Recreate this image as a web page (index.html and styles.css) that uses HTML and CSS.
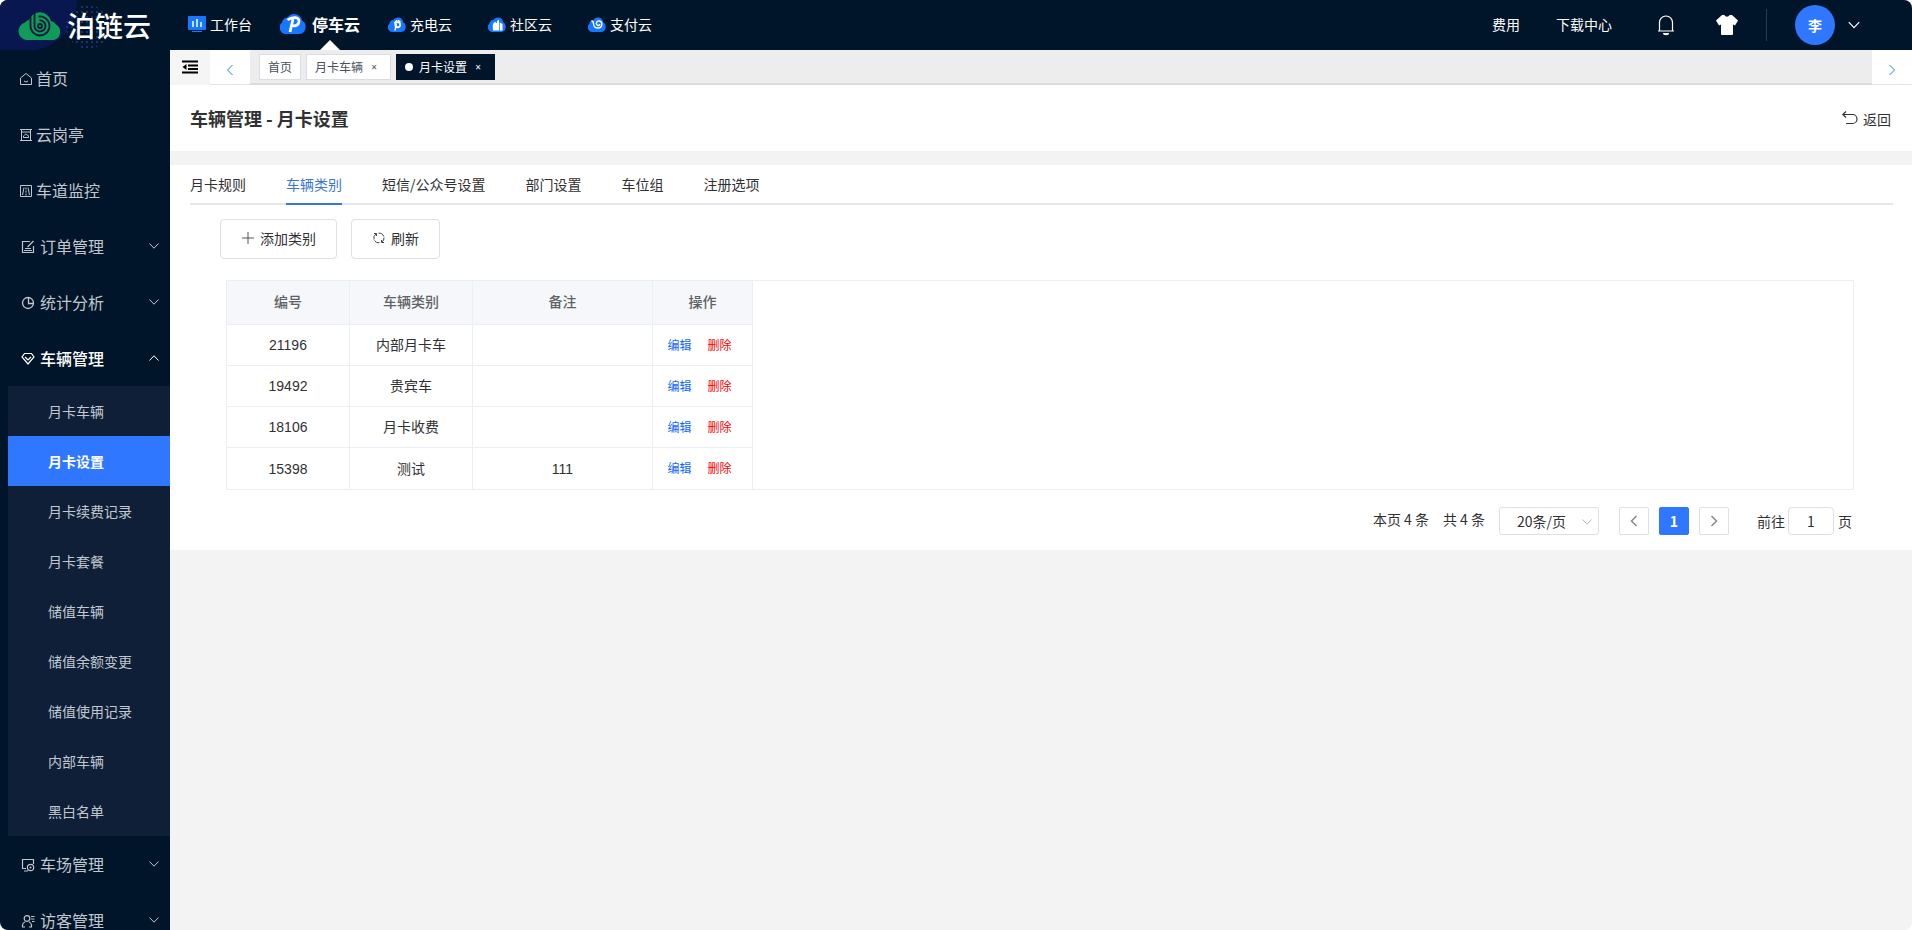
FILE: index.html
```html
<!DOCTYPE html>
<html lang="zh-CN">
<head>
<meta charset="utf-8">
<title>泊链云 - 月卡设置</title>
<link rel="stylesheet" href="styles.css">
</head>
<body>
<svg class="defs" aria-hidden="true">
  <symbol id="down" viewBox="0 0 12 12"><path d="M1.5 3.5 6 8.2l4.500-4.700" fill="none" stroke="currentColor"/></symbol>
  <symbol id="up" viewBox="0 0 12 12"><path d="M1.500 8.500 6 3.800l4.500 4.700" fill="none" stroke="currentColor"/></symbol>
  <symbol id="left" viewBox="0 0 12 12"><path d="M8.500 1 3.500 6l5 5" fill="none" stroke="currentColor"/></symbol>
  <symbol id="right" viewBox="0 0 12 12"><path d="M3.500 1l5 5-5 5" fill="none" stroke="currentColor"/></symbol>
  <symbol id="cloud" viewBox="0 0 26 22"><path d="M6 22a6.500 6.500 0 0 1-4-11.500Q3 6 7.500 5.500a8 8 0 0 1 14.500 3A7.300 7.300 0 0 1 19.500 22z" fill="#1677ff"/></symbol>
</svg>
<div class="app">
  <header class="topbar">
    <a class="logo" href="#">
      <svg class="logo-bg" viewBox="0 0 170 50" aria-hidden="true">
        <defs><pattern id="dots" width="5" height="5" patternUnits="userSpaceOnUse"><rect x="1" y="1" width="2" height="2" fill="#16307f"/></pattern></defs>
        <path d="M0 0h77C77 26 61 44 36 50H0z" fill="#091750"/>
        <circle cx="88" cy="27" r="22" fill="url(#dots)"/>
      </svg>
      <svg class="logo-mark" viewBox="0 0 46 32" aria-hidden="true">
        <path d="M9 31a9 9 0 0 1-1-17.500Q10 11 12 11a11.500 11.500 0 0 1 22 1 7 7 0 0 1 5 3.500A8.500 8.500 0 0 1 37 31z" fill="#109c58"/>
        <g fill="none" stroke="#06183c" stroke-width="1.800"><path d="M13.500 4.500V17a9.500 9.500 0 1 0 8-9.400"/><path d="M17.500 3v14a5.500 5.500 0 1 0 5-5.500"/><circle cx="23" cy="17" r="2"/></g>
      </svg>
      <span>泊链云</span>
    </a>
    <nav class="products" aria-label="产品">
      <a href="#"><svg width="18" height="18" viewBox="0 0 18 18"><rect y="1" width="18" height="14" rx="1" fill="#1677ff"/><path d="M5 6v6M9 4v8M13 7v5" stroke="#fff" stroke-width="1.500"/><path d="M4 16.500h10" stroke="#1677ff"/></svg>工作台</a>
      <a href="#" class="current"><svg width="26" height="22" viewBox="0 0 26 22"><use href="#cloud"/><path d="m10 20 3-13M7.500 8C12 4.500 19.500 4.500 19 9.500c-.5 4-4 5-7 4" fill="none" stroke="#fff" stroke-width="2.800"/></svg>停车云</a>
      <a href="#"><svg width="18" height="16" viewBox="0 0 26 22" preserveAspectRatio="none"><use href="#cloud"/><circle cx="14" cy="12" r="3.500" fill="none" stroke="#fff" stroke-width="2.500"/><path d="m10 20 2-9M9 10l4-4M14 6l4 2" stroke="#fff" stroke-width="2"/></svg>充电云</a>
      <a href="#"><svg width="18" height="16" viewBox="0 0 26 22" preserveAspectRatio="none"><use href="#cloud"/><path d="M7 20v-9l3-3 3 2v10zM13 20V7l3-2v15zM17 20V9l4 2v9z" fill="#fff"/></svg>社区云</a>
      <a href="#"><svg width="18" height="16" viewBox="0 0 26 22" preserveAspectRatio="none"><use href="#cloud"/><path d="M5 7c2 0 3 1 3 4 1 8 12 7 12 0 0-5-7-6-8-1 0 4 5 4 5 1" fill="none" stroke="#fff" stroke-width="2"/></svg>支付云</a>
    </nav>
    <div class="tools">
      <a href="#" class="fee">费用</a>
      <a href="#" class="downloads">下载中心</a>
      <button type="button" class="bell" aria-label="通知"><svg width="18" height="22" viewBox="0 0 18 22"><path d="M1 17h16M2.500 17V8.500a6.500 6.500 0 0 1 13 0V17" fill="none" stroke="#fff" stroke-width="1.200"/><path d="M6 19h6a3 2.200 0 0 1-6 0z" fill="#fff"/></svg></button>
      <button type="button" class="shirt" aria-label="主题"><svg width="22" height="20" viewBox="0 0 22 20"><path d="M6 0h2.500c1 2.300 4 2.300 5 0H16l6 5.500-3 5-2-1V19q0 1-1 1H6q-1 0-1-1V9.500l-2 1-3-5z" fill="#fff"/></svg></button>
      <span class="divider"></span>
      <button type="button" class="account"><span class="avatar">李</span><svg width="14" height="14"><use href="#down"/></svg></button>
    </div>
  </header>
  <div class="body">
    <nav class="sidebar" aria-label="主菜单">
      <a class="item" href="#"><svg width="12" height="12" viewBox="0 0 12 12"><path d="M.5 5 6 .5 11.500 5v6.500H.5zM4 8q2 2 4 0" fill="none" stroke="currentColor"/></svg>首页</a>
      <a class="item" href="#"><svg width="12" height="12" viewBox="0 0 12 12"><path d="M0 .5h12M1.500 1v10M10.500 1v10M0 11.500h12M1 3h10M3.500 8.500h5Q9 6 7 6 6 4 4.500 6 3 6.500 3.500 8.500z" fill="none" stroke="currentColor"/></svg>云岗亭</a>
      <a class="item" href="#"><svg width="12" height="12" viewBox="0 0 12 12"><path d="M.5.5h11v11H.5zM4 2.500 2.500 10M8 2.500 9.500 10M6 2.500v2M6 5.500v2M6 8.500v2" fill="none" stroke="currentColor"/></svg>车道监控</a>
      <a class="item group" href="#"><svg width="14" height="14" viewBox="0 0 14 14"><path d="M9 1.500H1.500v11h11V6M3 10.500h8M4 8.500h6M6.500 7 12.500 1" fill="none" stroke="currentColor" stroke-width="1.200"/></svg>订单管理<svg class="arrow"><use href="#down"/></svg></a>
      <a class="item group" href="#"><svg width="14" height="14" viewBox="0 0 14 14"><circle cx="7" cy="7" r="5.500" fill="none" stroke="currentColor" stroke-width="1.300"/><path d="M7.500 1.500v6h5" fill="none" stroke="currentColor" stroke-width="1.300"/></svg>统计分析<svg class="arrow"><use href="#down"/></svg></a>
      <a class="item group open" href="#"><svg width="14" height="14" viewBox="0 0 14 14"><path d="M3.500 1.500h7L13 5 7 12 1 5zM4 5l3 3 3-3" fill="none" stroke="currentColor" stroke-width="1.200"/></svg>车辆管理<svg class="arrow"><use href="#up"/></svg></a>
      <div class="submenu">
        <a href="#">月卡车辆</a>
        <a href="#" class="active">月卡设置</a>
        <a href="#">月卡续费记录</a>
        <a href="#">月卡套餐</a>
        <a href="#">储值车辆</a>
        <a href="#">储值余额变更</a>
        <a href="#">储值使用记录</a>
        <a href="#">内部车辆</a>
        <a href="#">黑白名单</a>
      </div>
      <a class="item group" href="#"><svg width="14" height="14" viewBox="0 0 14 14"><path d="M5 10.500H1.500v-9h11V6M3 13h4" fill="none" stroke="currentColor" stroke-width="1.200"/><circle cx="9.500" cy="9.500" r="3.200" fill="none" stroke="currentColor" stroke-width="1.200"/><circle cx="9.500" cy="9.500" r="1" fill="currentColor"/></svg>车场管理<svg class="arrow"><use href="#down"/></svg></a>
      <a class="item group" href="#"><svg width="14" height="14" viewBox="0 0 14 14"><circle cx="6" cy="4.500" r="2.800" fill="none" stroke="currentColor" stroke-width="1.200"/><path d="M1.500 13v-2Q2 8.500 4 8M8 8q2 .5 2.500 3v2M10 2.500h3.500M10 5h3.500M11 7.500h2.500M1 13h3M8 13h3" fill="none" stroke="currentColor" stroke-width="1.200"/></svg>访客管理<svg class="arrow"><use href="#down"/></svg></a>
    </nav>
    <main class="main">
      <div class="tagbar">
        <button type="button" class="fold" aria-label="收起菜单"><svg width="16" height="14" viewBox="0 0 16 14"><path d="M0 1.500h16M6 5.500h10M6 9h10M0 12.500h16" stroke="#000" stroke-width="2"/><path d="M4.500 4v6L.5 7z"/></svg></button>
        <button type="button" class="scroll" aria-label="向左"><svg width="12" height="12"><use href="#left"/></svg></button>
        <div class="tags">
          <a class="tag" href="#">首页</a>
          <a class="tag" href="#">月卡车辆<span class="close">×</span></a>
          <a class="tag on" href="#"><i class="dot"></i>月卡设置<span class="close">×</span></a>
        </div>
        <button type="button" class="scroll" aria-label="向右"><svg width="12" height="12"><use href="#right"/></svg></button>
      </div>
      <div class="heading">
        <h1>车辆管理 - 月卡设置</h1>
        <a href="#" class="back"><svg width="16" height="14" viewBox="0 0 16 14"><path d="M4 .5.800 3.500 4 6.500M1 3.500h9.500a4.500 4.500 0 0 1 0 9H4" fill="none" stroke="#333" stroke-width="1.200"/></svg>返回</a>
      </div>
      <section class="panel">
        <nav class="tabs" aria-label="设置">
          <a href="#">月卡规则</a>
          <a href="#" class="selected">车辆类别</a>
          <a href="#">短信/公众号设置</a>
          <a href="#">部门设置</a>
          <a href="#">车位组</a>
          <a href="#">注册选项</a>
        </nav>
        <div class="actions">
          <button type="button"><svg width="14" height="14" viewBox="0 0 14 14"><path d="M7 1v12M1 7h12" stroke="#555"/></svg>添加类别</button>
          <button type="button"><svg width="14" height="14" viewBox="0 0 14 14"><path d="M2 8.500A5 5 0 0 1 4 3M2 2.500h2.500V5M6.500 2.200A5 5 0 0 1 11.800 5.500M12 6.500A5 5 0 0 1 10 11M12 11.500H9.500V9M7.500 11.800A5 5 0 0 1 2.500 9.500" fill="none" stroke="#444"/></svg>刷新</button>
        </div>
        <div class="grid">
          <table>
            <colgroup><col class="c-id"><col class="c-id"><col class="c-note"><col class="c-ops"></colgroup>
            <thead><tr><th>编号</th><th>车辆类别</th><th>备注</th><th>操作</th></tr></thead>
            <tbody>
              <tr><td>21196</td><td>内部月卡车</td><td></td><td><a href="#" class="edit">编辑</a><a href="#" class="remove">删除</a></td></tr>
              <tr><td>19492</td><td>贵宾车</td><td></td><td><a href="#" class="edit">编辑</a><a href="#" class="remove">删除</a></td></tr>
              <tr><td>18106</td><td>月卡收费</td><td></td><td><a href="#" class="edit">编辑</a><a href="#" class="remove">删除</a></td></tr>
              <tr><td>15398</td><td>测试</td><td>111</td><td><a href="#" class="edit">编辑</a><a href="#" class="remove">删除</a></td></tr>
            </tbody>
          </table>
        </div>
        <div class="pager">
          <span>本页 4 条</span>
          <span>共 4 条</span>
          <div class="size"><select aria-label="每页条数"><option>20条/页</option></select><svg width="12" height="12"><use href="#down"/></svg></div>
          <button type="button" aria-label="上一页"><svg class="thick" width="12" height="12"><use href="#left"/></svg></button>
          <button type="button" class="page">1</button>
          <button type="button" aria-label="下一页"><svg class="thick" width="12" height="12"><use href="#right"/></svg></button>
          <label class="jump">前往<input type="text" value="1">页</label>
        </div>
      </section>
    </main>
  </div>
</div>
</body>
</html>
```
FILE: styles.css
```css
* { box-sizing: border-box; }
body {
  margin: 0;
  background: #fff;
  color: #303133;
  font: 14px/20px "Noto Sans CJK SC", sans-serif;
}
a { color: inherit; text-decoration: none; }
button, input, select { font: inherit; color: inherit; margin: 0; }
button { cursor: pointer; border: 0; background: none; padding: 0; }
svg { display: block; flex: none; }
.defs { position: absolute; width: 0; height: 0; }

.app {
  display: flex;
  flex-direction: column;
  height: 100vh;
  overflow: hidden;
  border-radius: 8px;
  background: #f3f3f3;
}

/* top bar */
.topbar {
  display: flex;
  flex: none;
  height: 50px;
  background: #001529;
  color: #fff;
}
.logo {
  position: relative;
  display: flex;
  align-items: center;
  width: 170px;
  padding-left: 17px;
  gap: 4px;
  font-size: 28px;
  font-weight: 500;
  line-height: 50px;
}
.logo-bg { position: absolute; inset: 0; width: 170px; height: 50px; }
.logo-mark { position: relative; width: 46px; height: 32px; }
.logo span { position: relative; }
.products { display: flex; padding-left: 18px; }
.products a {
  display: flex;
  align-items: center;
  gap: 4px;
  margin-right: 36px;
  padding-bottom: 2px;
}
.products .current {
  position: relative;
  gap: 6px;
  margin-left: -8px;
  margin-right: 28px;
  font-size: 16px;
  font-weight: 700;
}
.products .current svg { margin-bottom: 2px; }
.products .current::after {
  content: "";
  position: absolute;
  left: 50%;
  bottom: 0;
  border: 10px solid transparent;
  border-top: 0;
  border-bottom-color: #fff;
}
.tools {
  display: flex;
  align-items: center;
  margin-left: auto;
  padding-right: 51px;
}
.tools > a { padding-bottom: 2px; }
.downloads { margin-left: 36px; }
.bell { margin-left: 45px; }
.shirt { margin-left: 41px; }
.divider { width: 1px; height: 32px; margin: 0 28px; background: #2c3c4d; }
.account { display: flex; align-items: center; gap: 12px; }
.avatar {
  width: 40px;
  border-radius: 50%;
  background: #2f77ff;
  font-weight: 700;
  line-height: 40px;
}

/* side menu */
.body { display: flex; flex: 1; min-height: 0; }
.sidebar {
  width: 170px;
  flex: none;
  overflow: hidden;
  background: #001529;
  color: #c0c7ce;
}
.item {
  display: flex;
  align-items: center;
  height: 56px;
  padding: 0 10px 1px 20px;
  gap: 4px;
  font-size: 16px;
}
.item svg { margin-top: 3px; }
.group { padding-left: 21px; gap: 5px; }
.open { color: #fff; font-weight: 500; }
.item .arrow { width: 12px; height: 12px; margin: 0 0 0 auto; }
.submenu { margin-left: 8px; background: #0f1f38; }
.submenu a { display: block; padding-left: 40px; line-height: 50px; }
.submenu .active { background: #2f77ff; color: #fff; font-weight: 700; }

/* open page tags */
.main { flex: 1; min-width: 0; }
.tagbar { display: flex; height: 35px; background: #ededee; }
.fold { display: flex; width: 40px; padding: 10px 0 0 12px; background: #f5f5f5; }
.scroll {
  display: grid;
  place-items: center;
  width: 40px;
  padding-top: 5px;
  border-bottom: 1px solid #e4e4e6;
  background: #fff;
  color: #2f77ff;
}
.tags {
  display: flex;
  flex: 1;
  gap: 5px;
  padding: 4px 9px 0;
  border-bottom: 2px solid #dcdcde;
}
.tag {
  display: flex;
  align-items: center;
  height: 26px;
  padding: 0 8px;
  border: 1px solid #d8dce5;
  background: #fff;
  color: #495060;
  font-size: 12px;
}
.close { width: 16px; margin-left: 3px; font-size: 10px; text-align: center; font-family: "Noto Sans", sans-serif; }
.on { border-color: #001529; background: #001529; color: #fff; }
.dot { width: 8px; height: 8px; margin-right: 6px; border-radius: 50%; background: #fff; }

/* heading */
.heading {
  display: flex;
  align-items: center;
  justify-content: space-between;
  height: 66px;
  padding: 0 21px 0 20px;
  background: #fff;
}
h1 { margin: 0; font-size: 18px; line-height: 24px; }
.back { display: flex; align-items: center; gap: 5px; padding-top: 2px; }
.back svg { margin-bottom: 3px; }

/* content */
.panel { margin-top: 14px; padding: 0 19px 14px 20px; background: #fff; }
.tabs {
  display: flex;
  gap: 40px;
  height: 40px;
  border-bottom: 2px solid #e4e7ed;
  line-height: 38px;
}
.tabs .selected { height: 40px; border-bottom: 2px solid #3a76d6; color: #3a76d6; }
.actions { display: flex; gap: 14px; padding: 14px 0 21px 30px; }
.actions button {
  display: flex;
  align-items: center;
  gap: 5px;
  height: 40px;
  padding: 0 20px 2px;
  border: 1px solid #dcdfe6;
  border-radius: 4px;
  background: #fff;
}
.grid { margin: 0 39px 0 36px; border: 1px solid #ebeef5; }
table { table-layout: fixed; width: 526px; border-collapse: separate; border-spacing: 0; }
.c-id { width: 123px; }
.c-note { width: 180px; }
.c-ops { width: 100px; }
th, td {
  height: 41px;
  padding: 0;
  border: solid #ebeef5;
  border-width: 0 1px 1px 0;
  text-align: center;
  font-family: "Liberation Sans", "Noto Sans CJK SC", sans-serif;
}
th { height: 44px; padding-bottom: 1px; background: #f5f7fa; color: #606266; font-weight: 500; }
tbody tr:last-child td { border-bottom: 0; }
td:last-child { padding-right: 6px; }
td a { font-size: 12px; }
.edit { margin-right: 16px; color: #0f66ff; }
.remove { color: #f00; }

.pager {
  display: flex;
  align-items: center;
  justify-content: flex-end;
  padding: 16px 41px 0 0;
  height: 46px;
}
.pager > span { margin: 0 14px 4px 0; }
.size { position: relative; margin-right: 20px; }
.size select {
  display: block;
  appearance: none;
  width: 100px;
  height: 28px;
  padding: 0 0 1px 17px;
  border: 1px solid #dcdfe6;
  border-radius: 3px;
  background: #fff;
}
.size svg { position: absolute; right: 6px; top: 9px; color: #b0b4bc; pointer-events: none; }
.pager button {
  display: grid;
  place-items: center;
  width: 30px;
  height: 28px;
  margin-right: 10px;
  border: 1px solid #dcdfe6;
  border-radius: 2px;
}
.pager button + .jump { margin-left: 18px; }
.thick { color: #888; stroke-width: 1.5; }
.pager .page { border-color: #2f77ff; background: #2f77ff; color: #fff; font-weight: 700; }
.jump { display: flex; align-items: center; }
.jump input {
  width: 46px;
  height: 28px;
  margin: 0 4px 0 3px;
  padding: 0 0 1px;
  border: 1px solid #dcdfe6;
  border-radius: 4px;
  text-align: center;
}
```
